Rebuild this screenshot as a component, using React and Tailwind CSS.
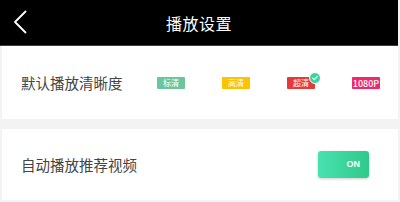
const font = { fontFamily: '"Noto Sans CJK SC", "Noto Sans", sans-serif' };

const Badge = ({ label, color, checked, size = 'text-[8px]' }) => (
  <div className="relative">
    <span className={`flex items-center justify-center w-[28px] h-[12px] rounded-[1px] leading-none text-white ${size} ${color}`}>
      {label}
    </span>
    {checked && (
      <span className="absolute -top-[5px] -right-[6px] w-[12px] h-[12px] rounded-full bg-[#3dd3a0] border border-white flex items-center justify-center">
        <svg viewBox="0 0 12 12" className="w-[8px] h-[8px]">
          <path d="M2.5 6.2 L5 8.5 L9.5 3.5" fill="none" stroke="white" strokeWidth="1.8" strokeLinecap="round" strokeLinejoin="round" />
        </svg>
      </span>
    )}
  </div>
);

export default function App() {
  return (
    <div className="w-[400px] h-[202px] bg-[#f3f3f3] pr-[2px] flex flex-col" style={font}>
      <div className="relative h-[46px] bg-black border-b border-[#3c3c3c] flex items-center justify-center">
        <svg viewBox="0 0 16 24" className="absolute left-[12px] top-[10px] w-[16px] h-[24px]">
          <path d="M13.5 1.5 L3 12 L13.5 22.5" fill="none" stroke="white" strokeWidth="1.8" strokeLinecap="round" strokeLinejoin="round" />
        </svg>
        <span className="text-white text-[16px] tracking-[0.5px]">播放设置</span>
      </div>
      <div className="pl-[2px] flex flex-col">
        <div className="h-[73px] bg-white flex items-center pl-[19px]">
          <span className="text-[14.5px] text-[#444] w-[136px]">默认播放清晰度</span>
          <div className="flex items-center gap-[37px] mt-[1px]">
            <Badge label="标清" color="bg-[#6cc69b]" />
            <Badge label="高清" color="bg-[#fcc300]" />
            <Badge label="超清" color="bg-[#e43a3c]" checked />
            <Badge label="1080P" color="bg-[#f2286d]" size="text-[9px] font-medium" />
          </div>
        </div>
        <div className="h-[10px]" />
        <div className="h-[71px] bg-white flex items-center justify-between pl-[19px] pr-[29px]">
          <span className="text-[14.5px] text-[#444]">自动播放推荐视频</span>
          <div className="w-[51px] h-[27px] rounded-[3px] bg-gradient-to-r from-[#48e2b0] to-[#2fc98b] shadow-[0_1px_3px_rgba(0,0,0,0.2)] flex items-center justify-end pr-[9px]">
            <span className="text-white text-[9px] font-bold" style={{ fontFamily: '"Liberation Sans", Arial, sans-serif' }}>ON</span>
          </div>
        </div>
      </div>
    </div>
  );
}
